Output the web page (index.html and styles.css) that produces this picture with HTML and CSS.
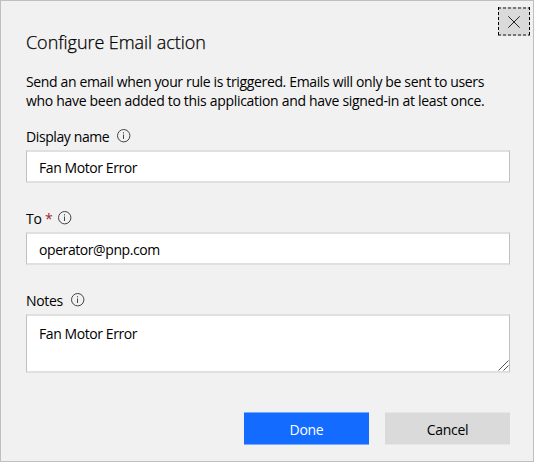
FILE: index.html
```html
<!DOCTYPE html>
<html lang="en">
<head>
<meta charset="utf-8">
<title>Configure Email action</title>
<link rel="stylesheet" href="styles.css">
</head>
<body>
<main class="dialog">
  <button class="close" aria-label="Close">
    <svg class="frame" width="32" height="29" viewBox="0 0 32 29" fill="none" stroke-dasharray="3 2">
      <path d="M0 1H32M0 28H32" stroke="#777" stroke-width="2"/>
      <path d="M.5 0V29M31.5 0V29" stroke="#000"/>
    </svg>
    <svg class="cross" width="12" height="12" viewBox="0 0 12 12" fill="none" stroke="#222"><path d="M.3.3 11.7 11.7M11.7.3.3 11.7"/></svg>
  </button>
  <h1 class="title">Configure Email action</h1>
  <p class="intro"><span class="line-one">Send an email when your rule is triggered. Emails will only be sent to users</span><br><span class="line-two">who have been added to this application and have signed-in at least once.</span></p>
  <div class="field">
    <div class="label"><label class="label-name" for="name">Display name</label>
      <svg class="info" width="14" height="14" viewBox="0 0 14 14" fill="none" stroke="#444"><circle cx="6.7" cy="6.7" r="6.2"/><path d="M6.5 5.5v4.5M6.5 3.2v1.2"/></svg></div>
    <input class="control" id="name" value="Fan Motor Error">
  </div>
  <div class="field">
    <div class="label"><label class="label-to" for="to">To <span class="required">*</span></label>
      <svg class="info" width="14" height="14" viewBox="0 0 14 14" fill="none" stroke="#444"><circle cx="6.7" cy="6.7" r="6.2"/><path d="M6.5 5.5v4.5M6.5 3.2v1.2"/></svg></div>
    <input class="control email" id="to" value="operator@pnp.com">
  </div>
  <div class="field">
    <div class="label"><label class="label-notes" for="notes">Notes</label>
      <svg class="info" width="14" height="14" viewBox="0 0 14 14" fill="none" stroke="#444"><circle cx="6.7" cy="6.7" r="6.2"/><path d="M6.5 5.5v4.5M6.5 3.2v1.2"/></svg></div>
    <div class="notes-wrap">
      <textarea class="control notes" id="notes">Fan Motor Error</textarea>
      <svg class="grip" width="11" height="11" viewBox="0 0 11 11" fill="none" stroke="#555"><path d="M.5 10.5l10-10M5.5 10.5l5-5"/></svg>
    </div>
  </div>
  <div class="actions">
    <button class="btn primary">Done</button>
    <button class="btn secondary">Cancel</button>
  </div>
</main>
</body>
</html>
```

FILE: styles.css
```css
* { box-sizing: border-box; }
body { margin: 0; }
.dialog {
  position: relative;
  width: 534px;
  height: 462px;
  padding: 29px 23px 0 25px;
  border: 1px solid #bfbfbf;
  background: #f1f1f1;
  color: #000;
  font: 14px/19px "Open Sans", "Noto Sans", sans-serif;
  letter-spacing: -0.3px;
  overflow: hidden;
}
.close {
  position: absolute;
  top: 6px;
  right: 3px;
  width: 32px;
  height: 29px;
  padding: 0;
  border: 0;
  background: #dadada;
}
.frame { position: absolute; inset: 0; }
.cross { position: absolute; left: 10px; top: 9px; }
.title {
  height: 24px;
  margin: 0 0 18px;
  font-size: 18px;
  font-weight: 300;
  line-height: 24px;
  letter-spacing: -0.05px;
  -webkit-text-stroke: 0.25px #000;
}
.intro { margin: 0 0 17px; white-space: nowrap; }
.line-one { letter-spacing: -0.355px; }
.line-two { letter-spacing: -0.305px; }
.field { margin-bottom: 26px; }
.label { display: flex; height: 20px; margin-bottom: 3px; line-height: 20px; }
.label-name { width: 83px; letter-spacing: -0.4px; white-space: nowrap; }
.label-to { width: 24px; white-space: nowrap; }
.label-notes { width: 37px; }
.info { margin: 2px 0 0 8px; }
.required { color: #a4262c; }
.control {
  display: block;
  width: 484px;
  height: 33px;
  margin: 0;
  padding: 2px 12px 0;
  border: solid #e0e0e0;
  border-width: 2px 1px;
  border-left-color: #c0c0c0;
  border-right-color: #c0c0c0;
  border-radius: 0;
  outline: 0;
  background: #fff;
  color: #000;
  font: inherit;
  letter-spacing: -0.42px;
}
.notes-wrap { position: relative; }
.notes { height: 59px; padding-top: 8px; resize: none; overflow: hidden; }
.grip { position: absolute; left: 472px; top: 46px; }
.actions { display: flex; gap: 16px; justify-content: flex-end; margin-top: 39px; }
.btn {
  width: 125px;
  height: 33px;
  padding: 1px 0 0;
  border: solid;
  border-width: 1px 0;
  font: inherit;
  letter-spacing: inherit;
}
.primary { border-color: #76aaff; background: #136bff; color: #fff; }
.secondary { border-color: #e6e6e6; background: #dadada; color: #000; }
```
